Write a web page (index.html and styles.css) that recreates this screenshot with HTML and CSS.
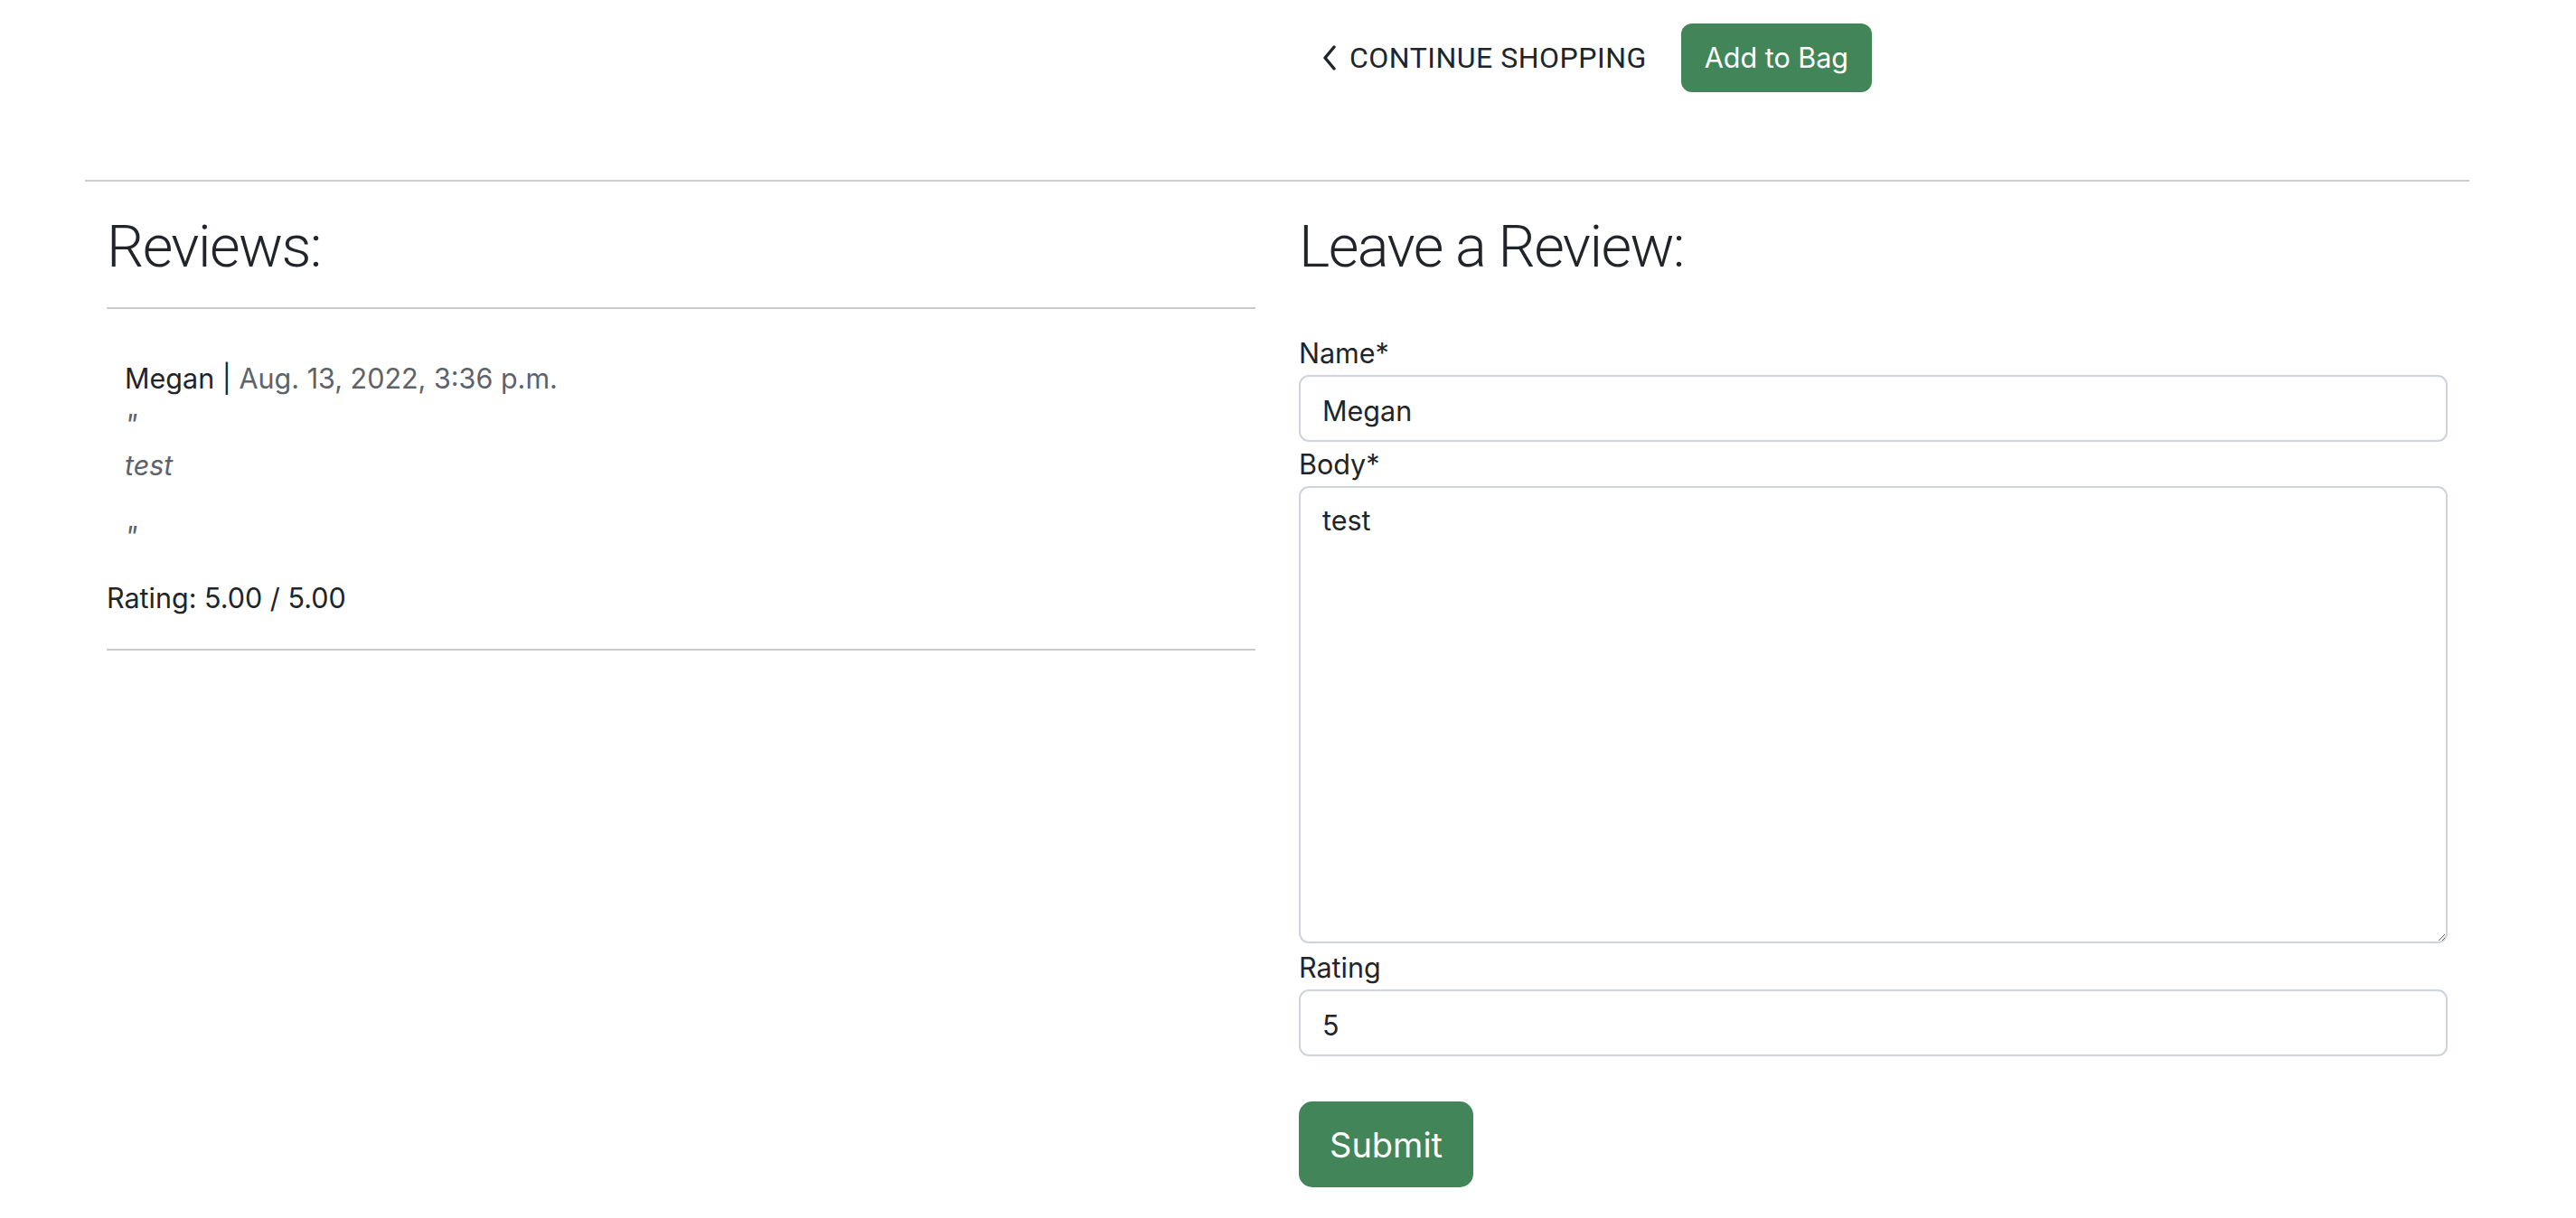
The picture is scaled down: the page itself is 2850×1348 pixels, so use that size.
FILE: index.html
```html
<!DOCTYPE html>
<html lang="en">
<head>
<meta charset="utf-8">
<title>Product reviews</title>
<link rel="stylesheet" href="styles.css">
</head>
<body>
<div class="page">
  <div class="row top-row">
    <div class="col"></div>
    <div class="col actions">
      <a class="shop-link" href="#">
        <svg class="chev" width="16" height="28" viewBox="0 0 16 28" aria-hidden="true"><polyline points="13,2 3,14 13,26" fill="none" stroke="#212529" stroke-width="3.4" stroke-linecap="round" stroke-linejoin="round"/></svg>
        <span>CONTINUE SHOPPING</span>
      </a>
      <a class="btn-green btn-bag" href="#">Add to Bag</a>
    </div>
  </div>
  <hr class="divider">
  <div class="row">
    <div class="col">
      <h2 class="heading">Reviews:</h2>
      <hr class="rule">
      <div class="review">
        <div class="meta"><span class="author">Megan |</span> <span class="date">Aug. 13, 2022, 3:36 p.m.</span></div>
        <div class="quote">
          <div class="qmark">"</div>
          <p class="body">test</p>
          <div class="qmark">"</div>
        </div>
      </div>
      <p class="rating">Rating: 5.00 / 5.00</p>
      <hr class="rule rule-bottom">
    </div>
    <div class="col">
      <h2 class="heading">Leave a Review:</h2>
      <form class="review-form">
        <label class="field-label" for="name">Name*</label>
        <input class="field" id="name" type="text" value="Megan">
        <label class="field-label" for="body">Body*</label>
        <textarea class="field area" id="body">test</textarea>
        <label class="field-label" for="rating">Rating</label>
        <input class="field" id="rating" type="text" value="5">
        <button class="btn-green btn-submit" type="button">Submit</button>
      </form>
    </div>
  </div>
</div>
</body>
</html>
```
FILE: styles.css
```css
html, body {
  margin: 0;
  padding: 0;
  background: #ffffff;
}
body {
  font-family: "Inter", "Roboto", sans-serif;
  font-size: 30.5px;
  line-height: 1.5;
  color: #212529;
}
.page {
  padding-left: 94px;
  width: 2638px;
}
.row {
  display: flex;
}
.col {
  flex: 1 1 0;
  min-width: 0;
  padding: 0 24px;
}
.top-row {
  padding-top: 26px;
}
.actions {
  display: flex;
  align-items: center;
}
.shop-link {
  display: flex;
  align-items: center;
  padding: 0 26px;
  color: #212529;
  text-decoration: none;
  font-family: "Roboto", sans-serif;
  font-size: 32px;
  letter-spacing: 0.5px;
  margin-right: 12px;
}
.chev {
  display: block;
  margin-right: 14px;
  margin-top: -1px;
}
.btn-green {
  display: inline-flex;
  align-items: center;
  justify-content: center;
  background: #428558;
  color: #ffffff;
  border: none;
  text-decoration: none;
  font-family: "Inter", sans-serif;
}
.btn-bag {
  height: 76px;
  padding: 0 26px;
  font-size: 30.5px;
  border-radius: 12px;
}
.divider {
  margin: 97px 0 0 0;
  border: 0;
  border-top: 2px solid #cccccc;
}
.heading {
  font-family: "Roboto", sans-serif;
  font-weight: 300;
  font-size: 65px;
  line-height: 78px;
  letter-spacing: -1.6px;
  margin: 33px 0 0 0;
}
.rule {
  margin: 28px 0 0 0;
  border: 0;
  border-top: 2px solid #cccccc;
}
.review {
  padding-left: 20px;
  margin-top: 54px;
}
.author {
  color: #212529;
}
.date {
  color: #5c636a;
}
.quote {
  color: #5c636a;
  font-style: italic;
}
.qmark {
  line-height: 45.75px;
  height: 45.75px;
  position: relative;
  top: 5px;
}
.body {
  margin: 4px 0 29px 0;
}
.rating {
  margin: 27px 0 0 0;
}
.rule-bottom {
  margin-top: 33px;
}
.review-form {
  margin-top: 57px;
}
.field-label {
  display: block;
  line-height: 44px;
  margin-bottom: 2px;
}
.field {
  display: block;
  box-sizing: border-box;
  width: 100%;
  height: 74px;
  margin: 0 0 3px 0;
  padding: 4px 24px 0 24px;
  border: 2px solid #ced4da;
  border-radius: 11px;
  font-family: "Inter", sans-serif;
  font-size: 30.5px;
  color: #212529;
  background: #ffffff;
}
.area {
  height: 506px;
  padding-top: 13px;
  line-height: 1.5;
  margin-bottom: 5px;
  resize: vertical;
}
.btn-submit {
  margin-top: 47px;
  height: 95px;
  padding: 0 34px;
  font-size: 38px;
  border-radius: 15px;
}
```
